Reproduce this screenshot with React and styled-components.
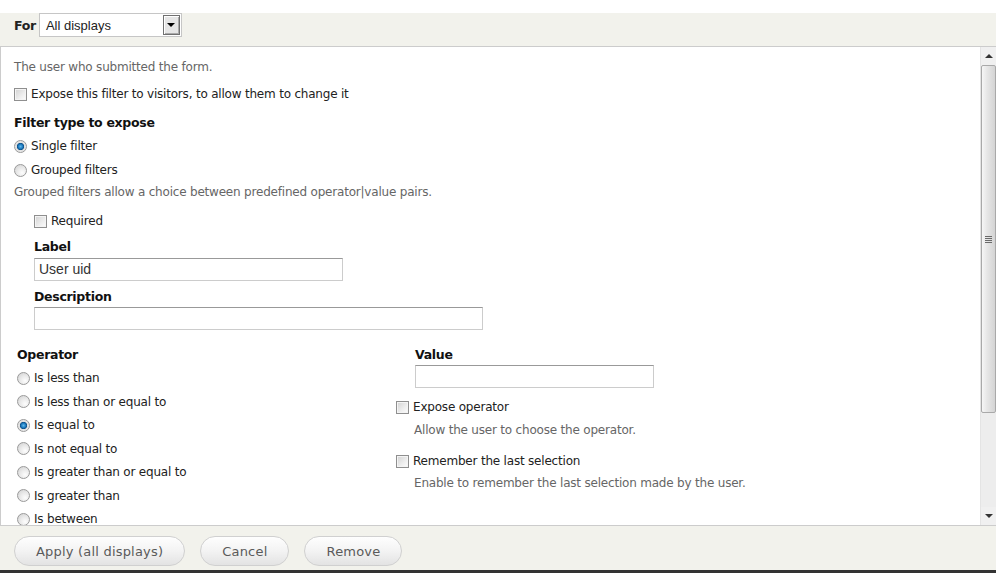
import styled, { createGlobalStyle } from "styled-components"

const GlobalStyle = createGlobalStyle`
    html, body {
        margin: 0;
        padding: 0;
        background: #fff;
    }
    body {
        font-family: "DejaVu Sans", Verdana, sans-serif;
        font-size: 12px;
        letter-spacing: -0.2px;
        color: #333;
    }
`

const OPERATORS = [
    "Is less than",
    "Is less than or equal to",
    "Is equal to",
    "Is not equal to",
    "Is greater than or equal to",
    "Is greater than",
    "Is between",
]

export default function App() {
    return (
        <Page>
            <GlobalStyle />
            <Header>
                <ForLabel>For</ForLabel>
                <Select>
                    <span>All displays</span>
                    <SelectArrow />
                </Select>
            </Header>

            <Middle>
                <Content>
                    <Description $mt={0}>The user who submitted the form.</Description>
                    <Option $mt={9}>
                        <CheckBox />
                        Expose this filter to visitors, to allow them to change it
                    </Option>

                    <Heading $mt={11}>Filter type to expose</Heading>
                    <Option $mt={5}>
                        <Radio $checked />
                        Single filter
                    </Option>
                    <Option $mt={6}>
                        <Radio />
                        Grouped filters
                    </Option>
                    <Description $mt={4}>Grouped filters allow a choice between predefined operator|value pairs.</Description>

                    <Indent>
                        <Option $mt={11}>
                            <CheckBox />
                            Required
                        </Option>
                        <Heading $mt={8}>Label</Heading>
                        <TextInput $width={309} $mt={2}>User uid</TextInput>
                        <Heading $mt={7}>Description</Heading>
                        <TextInput $width={449} $mt={1} />
                    </Indent>

                    <Columns>
                        <OperatorColumn>
                            <Heading $mt={0}>Operator</Heading>
                            <RadioList>
                                {OPERATORS.map((op, i) => (
                                    <Option key={op} $mt={0}>
                                        <Radio $checked={i === 2} />
                                        {op}
                                    </Option>
                                ))}
                            </RadioList>
                        </OperatorColumn>

                        <ValueColumn>
                            <Inset $left={19}>
                                <Heading $mt={0}>Value</Heading>
                                <TextInput $width={239} $mt={1} />
                            </Inset>
                            <Option $mt={10}>
                                <CheckBox />
                                Expose operator
                            </Option>
                            <Inset $left={18}>
                                <Description $mt={5}>Allow the user to choose the operator.</Description>
                            </Inset>
                            <Option $mt={13}>
                                <CheckBox />
                                Remember the last selection
                            </Option>
                            <Inset $left={18}>
                                <Description $mt={4}>Enable to remember the last selection made by the user.</Description>
                            </Inset>
                        </ValueColumn>
                    </Columns>
                </Content>

                <ScrollBar>
                    <ScrollButton><Arrow /></ScrollButton>
                    <Thumb>
                        <Grip><i /><i /><i /><i /></Grip>
                    </Thumb>
                    <Track />
                    <ScrollButton><Arrow $down /></ScrollButton>
                </ScrollBar>
            </Middle>

            <Footer>
                <Button>Apply (all displays)</Button>
                <Button>Cancel</Button>
                <Button>Remove</Button>
            </Footer>
        </Page>
    )
}

const Page = styled.div`
    height: 573px;
    display: flex;
    flex-direction: column;
    padding-top: 13px;
    box-sizing: border-box;
    border-bottom: 3px solid #333;
    overflow: hidden;
`

const Header = styled.div`
    height: 33px;
    flex: none;
    background: #f2f2ec;
    border-bottom: 1px solid #ccc;
    display: flex;
    align-items: flex-start;
    gap: 3px;
    padding: 0 14px;
`

const ForLabel = styled.b`
    font-size: 12.5px;
    line-height: 25px;
    color: #222;
    letter-spacing: -0.3px;
`

const Select = styled.div`
    width: 143px;
    height: 24px;
    box-sizing: border-box;
    border: 1px solid #c6c6c6;
    background: #fff;
    display: flex;
    align-items: center;
    justify-content: space-between;
    padding: 0 1px 0 6px;
    font-family: "Liberation Sans", Arial, sans-serif;
    font-size: 13px;
    letter-spacing: 0;
    color: #222;
`

const SelectArrow = styled.span`
    width: 17px;
    height: 20px;
    box-sizing: border-box;
    border: 1px solid #707070;
    box-shadow: inset 1px 1px 0 #fff, inset -1px -1px 0 #aaa;
    background: #e6e6e6;
    display: flex;
    align-items: center;
    justify-content: center;
    &::after {
        content: "";
        border-left: 4px solid transparent;
        border-right: 4px solid transparent;
        border-top: 4px solid #000;
    }
`

const Middle = styled.div`
    flex: 1;
    display: flex;
    min-height: 0;
`

const Content = styled.div`
    flex: 1;
    overflow: hidden;
    border-left: 1px solid #ccc;
    padding: 11px 0 0 13px;
`

const Description = styled.div`
    line-height: 18px;
    margin-top: ${p => p.$mt}px;
    color: #666;
`

const Heading = styled.div`
    line-height: 18px;
    margin-top: ${p => p.$mt}px;
    font-weight: bold;
    font-size: 12.5px;
    color: #111;
    letter-spacing: -0.3px;
`

const Option = styled.div`
    display: flex;
    align-items: center;
    gap: 4px;
    height: 18px;
    margin-top: ${p => p.$mt}px;
    color: #222;
`

const CheckBox = styled.span`
    width: 13px;
    height: 13px;
    box-sizing: border-box;
    flex: none;
    border: 1px solid #8f8f8f;
    background: linear-gradient(135deg, #d2d2d2 0%, #eeeeee 60%, #fdfdfd 100%);
    box-shadow: inset 0 0 0 1px #f4f4f4;
`

const Radio = styled.span`
    width: 13px;
    height: 13px;
    box-sizing: border-box;
    flex: none;
    border-radius: 50%;
    border: 1px solid #9a9a9a;
    background: ${p => p.$checked
        ? "radial-gradient(circle at 50% 50%, #5fb8ec 0, #1773b8 2.5px, #0d4f86 3.3px, #e0e0e0 4px, #f6f6f6 100%)"
        : "radial-gradient(circle at 65% 70%, #fdfdfd 0, #eaeaea 45%, #cfcfcf 100%)"};
`

const Indent = styled.div`
    padding-left: 20px;
`

const TextInput = styled.div`
    width: ${p => p.$width}px;
    height: 23px;
    margin-top: ${p => p.$mt}px;
    box-sizing: border-box;
    border: 1px solid #ccc;
    border-top-color: #999;
    padding: 0 4px;
    font-family: "Liberation Sans", Arial, sans-serif;
    font-size: 14px;
    letter-spacing: 0;
    line-height: 21px;
    color: #333;
`

const Columns = styled.div`
    display: flex;
    margin-top: 16px;
`

const OperatorColumn = styled.div`
    width: 379px;
    padding-left: 3px;
`

const RadioList = styled.div`
    display: flex;
    flex-direction: column;
    gap: 5.5px;
    margin-top: 5px;
`

const ValueColumn = styled.div`
    display: flex;
    flex-direction: column;
`

const Inset = styled.div`
    padding-left: ${p => p.$left}px;
`

const ScrollBar = styled.div`
    width: 16px;
    flex: none;
    display: flex;
    flex-direction: column;
    background: #f0f0f0;
    border-left: 1px solid #e4e4e4;
    box-sizing: border-box;
`

const ScrollButton = styled.div`
    height: 18px;
    flex: none;
    display: flex;
    align-items: center;
    justify-content: center;
`

const Arrow = styled.span`
    border-left: 4px solid transparent;
    border-right: 4px solid transparent;
    ${p => p.$down ? "border-top: 4px solid #333;" : "border-bottom: 4px solid #333;"}
`

const Thumb = styled.div`
    height: 348px;
    flex: none;
    box-sizing: border-box;
    border: 1px solid #a9a9a9;
    border-radius: 2px;
    background: linear-gradient(90deg, #f6f6f6 0%, #e6e6e6 40%, #d4d4d4 100%);
    display: flex;
    align-items: center;
    justify-content: center;
`

const Grip = styled.div`
    display: flex;
    flex-direction: column;
    gap: 1px;
    i {
        display: block;
        width: 7px;
        height: 1px;
        background: #6a6a6a;
    }
`

const Track = styled.div`
    flex: 1;
    background: #ededed;
`

const Footer = styled.div`
    height: 45px;
    flex: none;
    background: #f2f2ec;
    border-top: 1px solid #ccc;
    display: flex;
    align-items: flex-start;
    gap: 15px;
    padding: 10px 14px 0;
    box-sizing: border-box;
`

const Button = styled.button`
    height: 30px;
    padding: 0 21px;
    border: 1px solid #d0d0d0;
    border-radius: 15px;
    background: linear-gradient(180deg, #fefefe 0%, #f3f3f3 50%, #e3e3e3 100%);
    color: #5a5a5a;
    font-family: "DejaVu Sans", Verdana, sans-serif;
    font-size: 13px;
    letter-spacing: 0.2px;
`
